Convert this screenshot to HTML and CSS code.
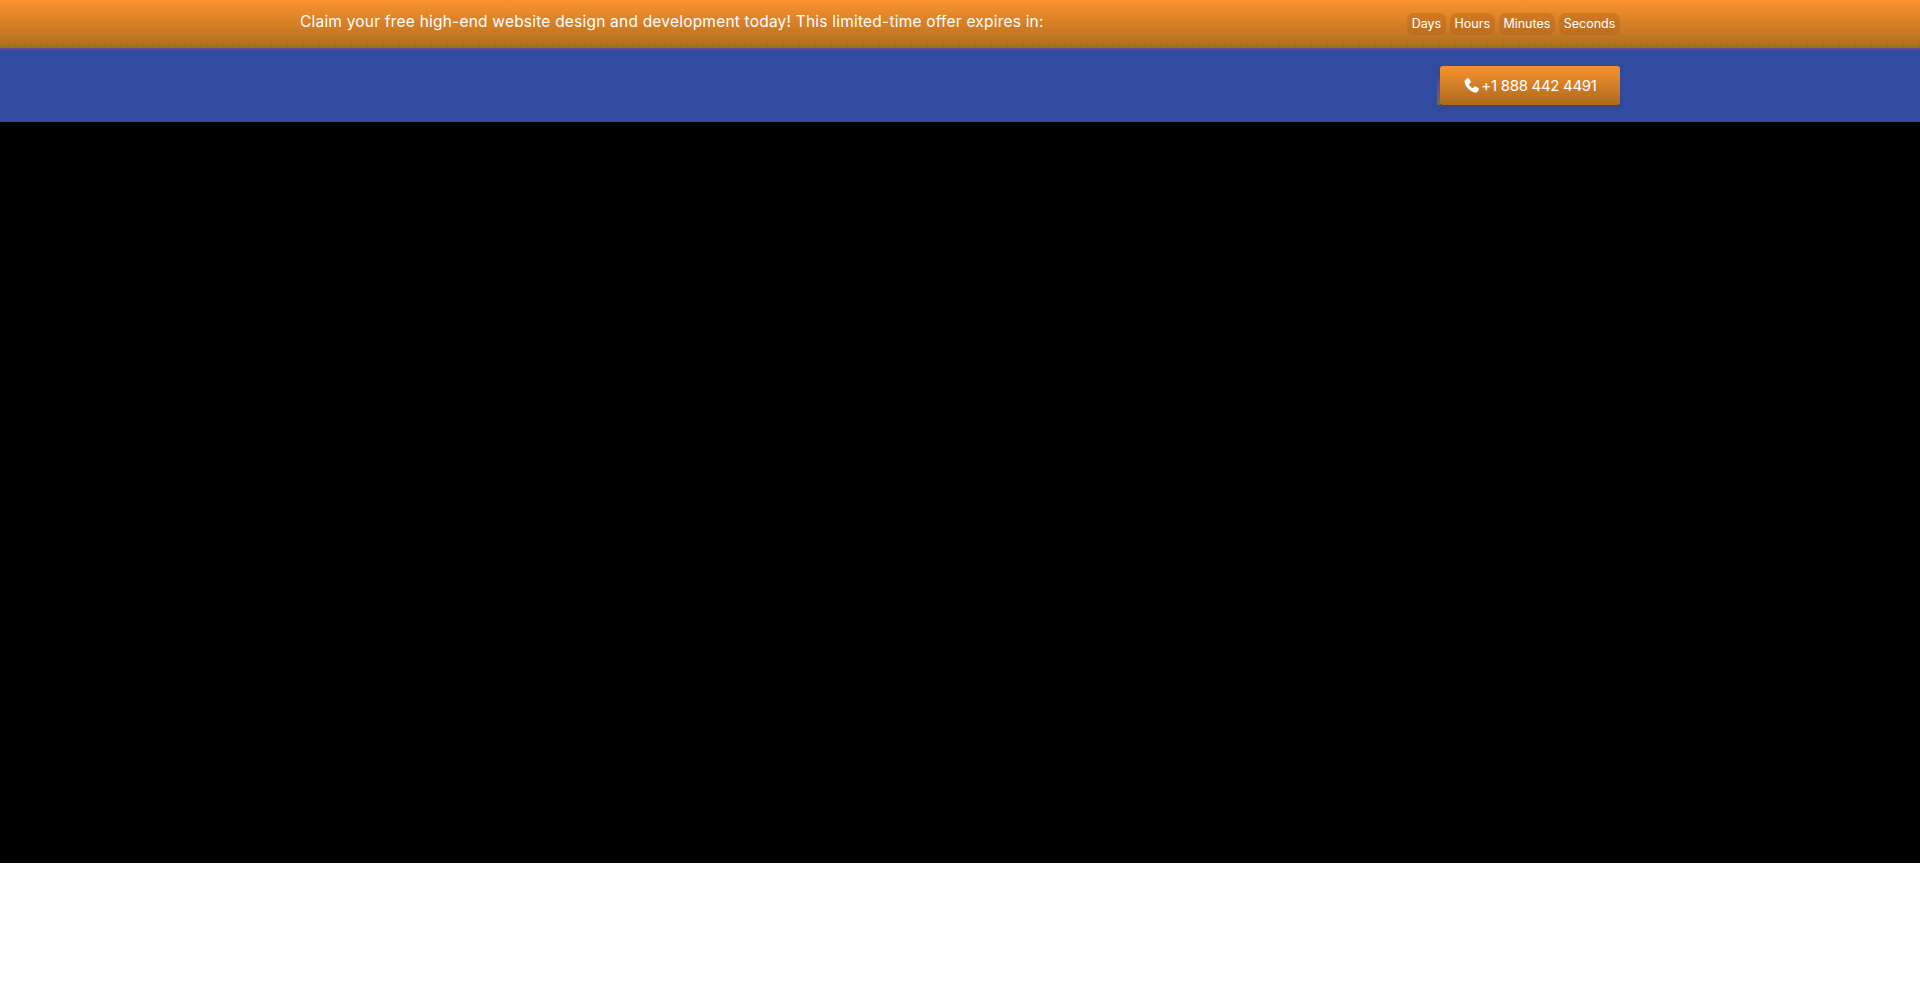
FILE: index.html
```html
<!DOCTYPE html>
<html lang="en">
<head>
  <meta charset="UTF-8">
  <meta name="viewport" content="width=device-width, initial-scale=1.0">
  <title>Free website offer</title>
  <link rel="stylesheet" href="styles.css">
</head>
<body>

<div class="offer-bar">
  <div class="wrap offer-inner">
    <p class="offer-text">Claim your free high-end website design and development today! This limited-time offer expires in:</p>
    <div class="timer">
      <span class="pill">Days</span>
      <span class="pill">Hours</span>
      <span class="pill">Minutes</span>
      <span class="pill">Seconds</span>
    </div>
  </div>
</div>

<header class="nav">
  <div class="wrap nav-inner">
    <a class="call" href="#">
      <svg class="call-icon" viewBox="0 0 24 24" aria-hidden="true">
        <path d="M6.6 1.6c.7-.3 1.500 0 1.900.6l2.400 3.900c.4.6.3 1.400-.2 1.900L8.900 9.700c-.3.3-.4.7-.2 1.100.9 1.800 2.500 3.600 4.500 4.600.4.2.8.1 1.100-.2l1.600-1.700c.5-.5 1.300-.6 1.900-.2l4 2.300c.7.4 1 1.200.7 1.900-.6 1.700-1.500 3.100-2.900 3.900-1.400.8-3 .7-4.700.1-5.800-2.100-10.300-6.700-12.200-12.300-.6-1.700-.6-3.300.2-4.600C4 3.200 5.100 2.200 6.600 1.600z"/>
      </svg>
      <span>+1 888 442 4491</span>
    </a>
  </div>
</header>

<section class="hero"></section>

</body>
</html>
```

FILE: styles.css
```css
* {
  box-sizing: border-box;
}
body {
  margin: 0;
  height: 993px;
  overflow: hidden;
  background-color: white;
  font-family: Inter, "Liberation Sans", sans-serif;
  color: white;
}
.wrap {
  width: 1320px;
  margin: 0 auto;
  display: flex;
  align-items: center;
  justify-content: space-between;
}
.offer-bar {
  position: relative;
  height: 48px;
  background: linear-gradient(#f7922f, #f08c2c 15%, #b5701f 92%);
}
/* scalloped olive edge along the bottom of the bar */
.offer-bar::after {
  content: "";
  position: absolute;
  left: 0;
  right: 0;
  bottom: -3px;
  height: 7px;
  background:
    repeating-linear-gradient(90deg, transparent 0 15px, rgba(110, 90, 60, 0.25) 15px 16px),
    linear-gradient(#ae701f00, #8a7a18 50%, #6a45a8 65%, #314ba100);
}
.offer-inner {
  height: 43px;
}
.offer-text {
  margin: 0;
  font-size: 15.5px;
  letter-spacing: 0.21px;
}
.timer {
  display: flex;
  gap: 4px;
  padding-top: 4px;
}
.pill {
  padding: 2px 4.7px;
  font-size: 12.5px;
  line-height: 18px;
  border-radius: 7px;
  background-color: rgba(160, 90, 25, 0.3);
}
.nav {
  height: 74px;
  background-color: #314ba1;
}
.nav-inner {
  height: 74px;
  justify-content: flex-end;
  padding-top: 1px;
}
.call {
  position: relative;
  display: flex;
  align-items: center;
  justify-content: center;
  gap: 1px;
  width: 180px;
  height: 39px;
  color: white;
  font-size: 15px;
  letter-spacing: -0.3px;
  text-decoration: none;
  border-radius: 3px;
  background: linear-gradient(#f7922f, #ac6a1e);
  box-shadow: 0 2px 2px rgba(90, 60, 70, 0.5);
}
/* strip of shadow on the lower left side of the button */
.call::before {
  content: "";
  position: absolute;
  left: -3px;
  top: 9px;
  bottom: 0;
  width: 3px;
  background: linear-gradient(#314ba1, #6a45a8 45%, #7f6a2a);
}
.call-icon {
  width: 17px;
  height: 17px;
  fill: white;
}
.hero {
  height: 741px;
  background-color: black;
}
```
